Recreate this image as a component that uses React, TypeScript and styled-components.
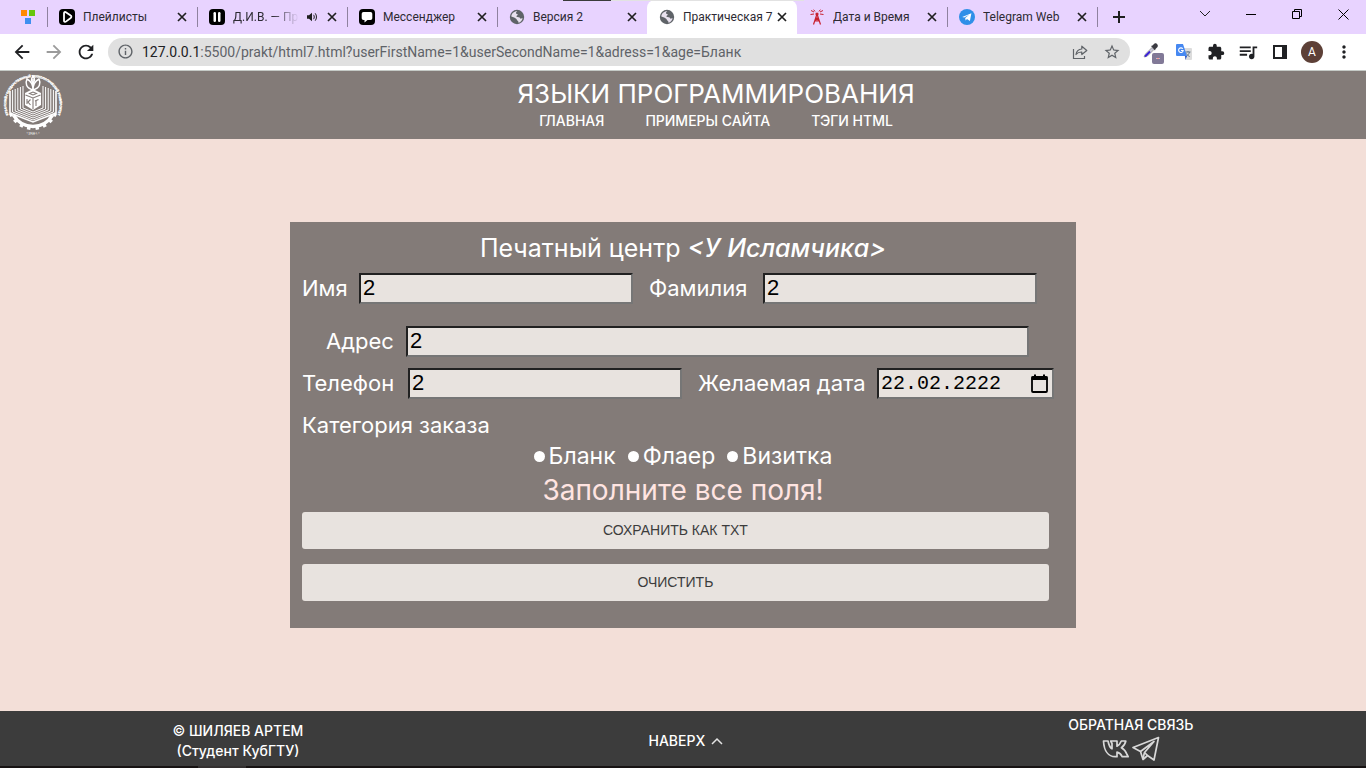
import React from "react";
import styled, { createGlobalStyle } from "styled-components";
import {
  MdArrowBack,
  MdArrowForward,
  MdExtension,
  MdInfoOutline,
  MdMoreVert,
  MdQueueMusic,
  MdRefresh,
  MdStarBorder,
} from "react-icons/md";

const GlobalStyle = createGlobalStyle`
  * { box-sizing: border-box; }
  html, body { margin: 0; padding: 0; }
  body { background: #f3dfd8; }
  button { font: inherit; color: inherit; padding: 0; border: 0; background: none; cursor: pointer; }
  svg { display: block; flex: none; }
`;

const siteFont = `Inter, "Open Sans", sans-serif`;
const chromeFont = `Roboto, "Open Sans", sans-serif`;

const Screen = styled.div`
  display: flex;
  flex-direction: column;
  min-height: 100vh;
`;

/* Browser window */

const TabStrip = styled.div`
  position: relative;
  display: flex;
  align-items: stretch;
  height: 34px;
  background: #e8d3ff;
  font-family: ${chromeFont};
  font-size: 12px;
  color: #2d2a33;
`;

const TopEdge = styled.div`
  position: absolute;
  top: 0;
  left: 563px;
  width: 241px;
  height: 1px;
  background: linear-gradient(to right, #3a3a3a 48px, #e2e2e2 48px);
`;

const PinnedTab = styled.button`
  display: flex;
  align-items: center;
  justify-content: center;
  width: 47px;
  padding-left: 9px;
`;

const Tab = styled.div<{ $active?: boolean; $divider?: boolean }>`
  position: relative;
  display: flex;
  align-items: center;
  flex: 0 1 150px;
  min-width: 0;
  padding: 0 8px 0 12px;
  border-radius: 8px 8px 0 0;
  background: ${(p) => (p.$active ? "#ffffff" : "transparent")};

  &::before {
    content: "";
    position: absolute;
    left: 0;
    top: 7px;
    width: 1px;
    height: 20px;
    background: ${(p) => (p.$divider ? "#8f829f" : "transparent")};
  }
`;

const TabTitle = styled.span<{ $fade?: boolean }>`
  flex: 1;
  min-width: 0;
  margin-left: 8px;
  margin-right: ${(p) => (p.$fade ? 8 : 0)}px;
  overflow: hidden;
  white-space: nowrap;
  line-height: 20px;
  ${(p) => p.$fade && "mask-image: linear-gradient(to right, #000 60%, transparent);"}
`;

const TabClose = styled.button<{ $spaced?: boolean }>`
  display: flex;
  align-items: center;
  justify-content: center;
  flex: none;
  width: 14px;
  height: 14px;
  margin-left: ${(p) => (p.$spaced ? 8 : 0)}px;
`;

const NewTab = styled.button`
  position: relative;
  display: flex;
  align-items: center;
  justify-content: center;
  width: 44px;

  &::before {
    content: "";
    position: absolute;
    left: 0;
    top: 7px;
    width: 1px;
    height: 20px;
    background: #8f829f;
  }
`;

const WindowControls = styled.div`
  display: flex;
  margin-left: auto;
`;

const WindowButton = styled.button`
  display: flex;
  align-items: center;
  justify-content: center;
  width: 46px;
  height: 28px;
`;

const Toolbar = styled.div`
  display: flex;
  align-items: center;
  height: 37px;
  padding: 0 6px 1px;
  background: #ffffff;
  border-bottom: 1px solid #c5cac6;
  font-family: ${chromeFont};
`;

const ToolButton = styled.button<{ $muted?: boolean }>`
  display: flex;
  align-items: center;
  justify-content: center;
  width: 32px;
  height: 28px;
  color: ${(p) => (p.$muted ? "#9b9b9b" : "#202124")};
`;

const Omnibox = styled.div`
  display: flex;
  align-items: center;
  flex: 1;
  min-width: 0;
  height: 28px;
  margin: 0 6px;
  padding: 0 9px;
  border-radius: 14px;
  background: #e0e0e0;
  color: #5f6368;
`;

const Address = styled.div`
  flex: 1;
  min-width: 0;
  margin-left: 8px;
  overflow: hidden;
  white-space: nowrap;
  font-size: 14px;
  line-height: 20px;
`;

const Host = styled.span`
  color: #202124;
`;

const OmniActions = styled.div`
  display: flex;
  align-items: center;
  gap: 15px;
`;

const Avatar = styled.button`
  width: 22px;
  height: 22px;
  margin: 0 5px;
  border-radius: 50%;
  background: #5d4037;
  color: #ffffff;
  font-family: Roboto, sans-serif;
  font-size: 12px;
  line-height: 22px;
`;

/* Site */

const SiteHeader = styled.header`
  display: flex;
  align-items: center;
  height: 68px;
  background: #837b78;
  color: #ffffff;
  font-family: ${siteFont};
`;

const HeaderCentre = styled.div`
  display: flex;
  flex: 1;
  flex-direction: column;
  align-items: center;
`;

const SiteTitle = styled.h1`
  margin: 0 0 2px;
  font-size: 26px;
  font-weight: 400;
  line-height: 30px;
`;

const SiteNav = styled.nav`
  display: flex;
  gap: 41px;
`;

const SiteLink = styled.a`
  color: #ffffff;
  font-size: 14px;
  font-weight: 500;
  line-height: 20px;
  text-decoration: none;
  white-space: nowrap;
`;

const Main = styled.main`
  display: flex;
  flex: 1;
  align-items: center;
  justify-content: center;
  background: #f3dfd8;
  font-family: ${siteFont};
`;

const OrderForm = styled.form`
  display: flex;
  flex-direction: column;
  width: 100%;
  max-width: 786px;
  padding: 10px 12px 27px;
  background: #837b78;
  color: #ffffff;
`;

const FormTitle = styled.h2`
  margin: 0 0 9px;
  font-size: 25px;
  font-weight: 400;
  line-height: 32px;
  text-align: center;

  em { font-weight: 500; }
`;

const Row = styled.div<{ $gap: number; $indent?: number }>`
  display: flex;
  align-items: center;
  height: 31px;
  margin-bottom: ${(p) => p.$gap}px;
  padding-left: ${(p) => p.$indent ?? 0}px;
`;

const Label = styled.label<{ $width: number }>`
  flex: none;
  width: ${(p) => p.$width}px;
  padding-bottom: 2px;
  font-size: 22px;
  line-height: 28px;
  white-space: nowrap;
`;

const Field = styled.input<{ $width: number }>`
  flex: 0 1 ${(p) => p.$width}px;
  min-width: 0;
  height: 31px;
  margin-right: 16px;
  padding: 0 2px 2px;
  border: 2px solid;
  border-color: #212121 #767676 #767676 #212121;
  border-radius: 0;
  background: #e8e3df;
  color: #000000;
  font-family: "Liberation Sans", Arial, sans-serif;
  font-size: 22px;
`;

const DateBox = styled.div`
  display: flex;
  align-items: center;
  flex: 0 1 177px;
  min-width: 0;
  height: 31px;
  padding: 0 3px 0 2px;
  border: 2px solid;
  border-color: #212121 #767676 #767676 #212121;
  background: #e8e3df;
  color: #000000;
`;

const DateInput = styled.input`
  flex: 1;
  min-width: 0;
  padding: 0;
  border: 0;
  background: none;
  color: inherit;
  font-family: "Liberation Mono", monospace;
  font-size: 20px;
`;

const Choices = styled.fieldset`
  min-width: 0;
  margin: 0;
  padding: 0;
  border: 0;
`;

const ChoicesTitle = styled.legend`
  padding: 0;
  font-size: 22px;
  line-height: 30px;
`;

const ChoiceRow = styled.div`
  display: flex;
  justify-content: center;
  gap: 12px;
  height: 32px;
`;

const Choice = styled.label`
  display: flex;
  align-items: center;
  gap: 4px;
  font-size: 23px;
  line-height: 30px;
`;

const Radio = styled.input`
  appearance: none;
  width: 11px;
  height: 11px;
  margin: 0;
  border-radius: 50%;
  background: #ffffff;

  &:checked { border: 3px solid #ffffff; background: #0075ff; }
`;

const Message = styled.p`
  margin: 0 0 4px;
  color: #ffe4e1;
  font-size: 28px;
  line-height: 36px;
  text-align: center;
`;

const Action = styled.button`
  width: 98%;
  height: 37px;
  padding-bottom: 2px;
  border-radius: 3px;
  background: #e8e3df;
  color: #3c3c3c;
  font-family: "Liberation Sans", Arial, sans-serif;
  font-size: 14px;

  & + & { margin-top: 15px; }
`;

const SiteFooter = styled.footer`
  display: flex;
  align-items: center;
  justify-content: space-around;
  height: 55px;
  background: #3c3c3c;
  color: #ffffff;
  font-family: ${siteFont};
  font-size: 14px;
  font-weight: 500;
  line-height: 20px;
  text-align: center;
`;

const FooterText = styled.p`
  margin: 0;
  padding-top: 4px;
`;

const TopLink = styled.a`
  display: flex;
  align-items: center;
  gap: 6px;
  padding-top: 4px;
  color: #ffffff;
  text-decoration: none;
`;

const Contacts = styled.div`
  display: flex;
  flex-direction: column;
  align-items: center;
`;

const SocialLinks = styled.div`
  display: flex;
  align-items: center;
  gap: 2px;
  height: 28px;
`;

const SocialLink = styled.a`
  color: #d8d8d8;
`;

const Taskbar = styled.div`
  height: 2px;
  background: linear-gradient(to right, #171313 198px, #333030 198px, #333030 246px, #171313 246px);
`;

/* Drawings */

const PlayIcon = () => (
  <svg width="16" height="16" viewBox="0 0 16 16">
    <rect width="16" height="16" rx="4" fill="#000" />
    <path d="M5 4.2c0-1 1-1.500 1.900-1l4.800 3.400c.9.600.9 1.800 0 2.400l-4.800 3.600c-.8.600-1.900.1-1.900-.9z" fill="none" stroke="#fff" strokeWidth="1.800" />
  </svg>
);

const PauseIcon = () => (
  <svg width="16" height="16" viewBox="0 0 16 16">
    <rect width="16" height="16" rx="4" fill="#000" />
    <rect x="4.500" y="3" width="2.500" height="10" rx="1.200" fill="#fff" />
    <rect x="9" y="3" width="2.500" height="10" rx="1.200" fill="#fff" />
  </svg>
);

const ChatIcon = () => (
  <svg width="16" height="16" viewBox="0 0 16 16">
    <rect width="16" height="16" rx="4" fill="#000" />
    <path d="M4.500 3h7A1.800 1.800 0 0 1 13.300 4.800v4.400A1.800 1.800 0 0 1 11.500 11H8.500L5.500 13.500V11h-1A1.800 1.800 0 0 1 2.700 9.200V4.800A1.800 1.800 0 0 1 4.500 3z" fill="#fff" />
  </svg>
);

const GlobeIcon = () => (
  <svg width="16" height="16" viewBox="0 0 16 16">
    <circle cx="8" cy="8" r="7.200" fill="#5f6368" />
    <path d="M8.300 2.200c-.8.700-1.500 1.100-1.300 2 .3.900 1.600.4 1.700 1.300.1.900-1.300 1-1.200 1.900.2.900 1.800.3 2.700.9.900.500.800 1.400 1.700 1.400.700 0 1-.6 1.700-.7-.3 2.300-1.900 4.300-4.200 4.800.2-.9-.1-1.500-.8-2-.6-.4-.6-1.200-1.200-1.700C6.400 9.300 4.200 8 2.300 7.600 2.500 4.400 5 2.100 8.300 2.200z" fill="#e8e1ee" />
  </svg>
);

const TowerIcon = () => (
  <svg width="16" height="16" viewBox="0 0 16 16" fill="none" stroke="#c8202f" strokeWidth="1.200">
    <path d="M8 5 4.500 15.500M8 5l3.500 10.500M6.500 9h3M5.500 12h5M6.500 9l4 3M9.500 9l-4 3" />
    <circle cx="8" cy="5" r="1" fill="#c8202f" />
    <path strokeWidth="1" d="M2 1.500 5 3M14 1.500 11 3M1.500 5.500 5 5M14.500 5.500 11 5M4.500.8 6.300 2.500M11.500.8 9.700 2.500" />
  </svg>
);

const TelegramIcon = () => (
  <svg width="16" height="16" viewBox="0 0 16 16">
    <circle cx="8" cy="8" r="8" fill="#2f8fe8" />
    <path d="M3.200 7.900 12.400 4.200 10.900 12 8 10l-1.400 1.500-.4-2.600 4-3.200-5 2.900z" fill="#fff" />
  </svg>
);

const BlocksIcon = () => (
  <svg width="14" height="14" viewBox="0 0 14 14">
    <rect width="6" height="6" fill="#ff8a00" />
    <rect x="8" width="6" height="6" fill="#66c60b" />
    <rect x="4" y="8" width="6" height="6" fill="#3f8ff0" />
  </svg>
);

const SpeakerIcon = () => (
  <svg width="10" height="10" viewBox="0 0 10 10">
    <path d="M0 3.200h2L5 .7v8.600L2 6.800H0z" fill="#1f1f1f" />
    <path d="M6.500 2.800c1 1.200 1 3.200 0 4.400M8.200 1.300c1.700 2 1.700 5.400 0 7.400" fill="none" stroke="#1f1f1f" strokeWidth="1" />
  </svg>
);

const CrossIcon = () => (
  <svg width="10" height="10" viewBox="0 0 10 10" fill="none" stroke="#1f1f1f" strokeWidth="1.700">
    <path d="m1 1 8 8M9 1 1 9" />
  </svg>
);

const PlusIcon = () => (
  <svg width="12" height="12" viewBox="0 0 12 12" fill="none" stroke="#1f1f1f" strokeWidth="2">
    <path d="M6 0v12M0 6h12" />
  </svg>
);

const ShareIcon = () => (
  <svg width="16" height="16" viewBox="0 0 16 16" fill="none" stroke="#5f6368" strokeWidth="1.200">
    <path d="M1.500 5v9.500h11V12" />
    <path d="M4 10.500C4.500 7 6.500 5.300 9.800 5V2.200L14.800 6.500 9.800 10.500V8C7.300 7.900 5.500 8.600 4 10.500z" strokeLinejoin="round" />
  </svg>
);

const DropperIcon = () => (
  <svg width="24" height="24" viewBox="0 0 24 24">
    <path d="m4 17 1.500-3L12 7.500l2 2L7.500 16z" fill="#c9c9d8" stroke="#777" strokeWidth=".6" />
    <path d="m5 16.500 5-5" stroke="#3b22d8" strokeWidth="1.800" />
    <path d="m11 6 1.500-.5L14 4c1.500-2 5 .8 3.500 3L15.500 9 15 10.500z" fill="#3b3b42" />
    <rect x="12" y="13" width="12" height="11" rx="2" fill="#817997" />
    <path d="M16.500 18.500h3" stroke="#fff" />
    <path d="M17.500 18.500h1" stroke="#e33" />
  </svg>
);

const TranslateIcon = () => (
  <svg width="16" height="16" viewBox="0 0 16 16">
    <path d="M7 4h8a1 1 0 0 1 1 1v10a1 1 0 0 1-1 1H9.500z" fill="#dcdcdc" />
    <path d="M9.500 8h5M12 7v1M13.500 8c-.5 2-1.800 3.500-3.200 4.300M10.500 9.500c.8 1.500 1.800 2.500 3.200 3" stroke="#65788a" fill="none" />
    <path d="M1 0h6l4 12H1a1 1 0 0 1-1-1V1a1 1 0 0 1 1-1z" fill="#4688f1" />
    <path d="M9 12h2l-1.500 4z" fill="#2a56c6" />
    <path d="M6.800 4.800A2.300 2.300 0 1 0 7.200 6.500H5" stroke="#fff" strokeWidth="1.100" fill="none" />
  </svg>
);

const SidePanelIcon = () => (
  <svg width="14" height="14" viewBox="0 0 14 14">
    <rect x="1" y="1" width="12" height="12" fill="none" stroke="#202124" strokeWidth="2" />
    <rect x="9" y="1" width="4" height="12" fill="#202124" />
  </svg>
);

const CalendarIcon = () => (
  <svg width="19" height="20" viewBox="0 0 19 20">
    <rect x="2" y="3" width="15" height="15" rx="1" fill="none" stroke="#000" strokeWidth="1.800" />
    <path d="M1.500 2.500h16V6h-16zM4 .5h2v3H4zM13 .5h2v3h-2z" fill="#000" />
  </svg>
);

const VkIcon = () => (
  <svg width="28" height="24" viewBox="0 0 28 24" fill="none" stroke="currentColor" strokeWidth="1.700" strokeLinejoin="round">
    <path d="M1.500 4H6c.8 4.300 2.200 6.800 4 7.800V6.500L8.700 4H15v5.200c2-1 3.400-2.800 4.300-5.200h4.500c-.6 3-2.200 5.200-4.400 6.800 2.600 1.400 4.500 3.600 5.600 6.700l1.200 2.200h-6c-.9-2.400-2.500-4-5.200-4.600v4.600h-1.800C6.500 19.700 2 14 1.500 4z" />
  </svg>
);

const PlaneIcon = () => (
  <svg width="28" height="26" viewBox="0 0 28 26" fill="none" stroke="currentColor" strokeWidth="1.700" strokeLinejoin="round">
    <path d="M26.500 1.500 1 11.500l7.500 4L11 23.500l4.500-4L22 24z" />
    <path d="M8.500 15.500 22 5.500 12.500 16.500 11 22.500M12.500 16.500l3 3" />
  </svg>
);

const bookPages = [0, 1, 2, 3, 4, 5];
const gearTeeth = [-64, -46, -28, -10, 10, 28, 46, 64];

const Emblem = () => (
  <svg width="66" height="66" viewBox="0 1 66 66" role="img" aria-label="КубГТУ">
    <defs>
      <path id="ring" d="M13.200 51.100A26.800 26.800 0 1 1 52.800 51.100" />
      <path id="ringBase" d="M20 61Q33 66 46 61" />
    </defs>
    <g fill="#fff" fontFamily="Liberation Sans, sans-serif" fontSize="3" fontWeight="700" textAnchor="middle">
      <text stroke="#fff" strokeWidth=".3"><textPath href="#ring" startOffset="50%">КУБАНСКИЙ ГОСУДАРСТВЕННЫЙ ТЕХНОЛОГИЧЕСКИЙ УНИВЕРСИТЕТ</textPath></text>
      <text><textPath href="#ringBase" startOffset="50%">• 1918 г. •</textPath></text>
    </g>
    <g fill="none" stroke="#fff">
      {bookPages.map((n) => (
        <path
          key={n}
          strokeWidth={n === 0 ? 1.6 : 1}
          d={`M${10 + 2.6 * n} ${20 - n}V${42 - n}L33 ${51 - 2 * n}L${56 - 2.6 * n} ${42 - n}V${20 - n}`}
        />
      ))}
      <path strokeWidth="1.500" d="M33 19V8M33 19C26 17 25 12 27 8c4 2 6 6 6 11zM33 19c7-2 8-7 6-11-4 2-6 6-6 11z" />
      <path strokeWidth="1.500" d="M33 12c-2-2-2-4 0-7 2 3 2 5 0 7z" />
      <path strokeWidth="3.500" d="M13.500 44.200A22.500 22.500 0 0 0 52.500 44.200" />
      {gearTeeth.map((a) => (
        <path key={a} strokeWidth="3.500" d="M33 56v3" transform={`rotate(${a} 33 33)`} />
      ))}
    </g>
    <path d="m33 18 8 4v12l-8 5-8-5V22z" fill="#fff" />
    <g stroke="#837b78" strokeWidth="1.100" fill="none">
      <path d="m25.500 24 7.500 3 7.500-3M33 27v11M27 28v5M30.500 28.500 28 31l2.500 3M36 30v5M35 30l3.500-1.500M29.500 22.500l3.500-1.500 3.500 1.500-3.500 1.500z" />
    </g>
  </svg>
);

type TabInfo = {
  title: string;
  icon: React.ReactNode;
  active?: boolean;
  divider?: boolean;
  sound?: boolean;
};

const tabs: TabInfo[] = [
  { title: "Плейлисты", icon: <PlayIcon />, divider: true },
  { title: "Д.И.В. — Пр", icon: <PauseIcon />, divider: true, sound: true },
  { title: "Мессенджер", icon: <ChatIcon />, divider: true },
  { title: "Версия 2", icon: <GlobeIcon />, divider: true },
  { title: "Практическая 7", icon: <GlobeIcon />, active: true },
  { title: "Дата и Время", icon: <TowerIcon /> },
  { title: "Telegram Web", icon: <TelegramIcon />, divider: true },
];

export default function App() {
  return (
    <Screen>
      <GlobalStyle />
      <TabStrip>
        <PinnedTab type="button" aria-label="Закреплённая вкладка"><BlocksIcon /></PinnedTab>
        {tabs.map((t) => (
          <Tab key={t.title} $active={t.active} $divider={t.divider}>
            {t.icon}
            <TabTitle $fade={t.sound}>{t.title}</TabTitle>
            {t.sound && <SpeakerIcon />}
            <TabClose type="button" aria-label="Закрыть" $spaced={t.sound}><CrossIcon /></TabClose>
          </Tab>
        ))}
        <NewTab type="button" aria-label="Новая вкладка"><PlusIcon /></NewTab>
        <WindowControls>
          <WindowButton type="button" aria-label="Поиск вкладок">
            <svg width="12" height="8" viewBox="0 0 12 8" fill="none" stroke="#222"><path d="m1 1 5 5 5-5" /></svg>
          </WindowButton>
          <WindowButton type="button" aria-label="Свернуть">
            <svg width="10" height="10" viewBox="0 0 10 10" fill="none" stroke="#000"><path d="M0 5.500h10" /></svg>
          </WindowButton>
          <WindowButton type="button" aria-label="Развернуть">
            <svg width="10" height="10" viewBox="0 0 10 10" fill="none" stroke="#000"><path d="M.5 2.500h7v7h-7zM2.500 2.500v-2h7v7h-2" /></svg>
          </WindowButton>
          <WindowButton type="button" aria-label="Закрыть окно">
            <svg width="11" height="11" viewBox="0 0 11 11" fill="none" stroke="#000"><path d="m.5.5 10 10M10.500.5l-10 10" /></svg>
          </WindowButton>
        </WindowControls>
        <TopEdge />
      </TabStrip>

      <Toolbar>
        <ToolButton type="button" aria-label="Назад"><MdArrowBack size={22} /></ToolButton>
        <ToolButton type="button" aria-label="Вперёд" $muted><MdArrowForward size={22} /></ToolButton>
        <ToolButton type="button" aria-label="Обновить"><MdRefresh size={22} /></ToolButton>
        <Omnibox>
          <MdInfoOutline size={17} />
          <Address><Host>127.0.0.1</Host>:5500/prakt/html7.html?userFirstName=1&amp;userSecondName=1&amp;adress=1&amp;age=Бланк</Address>
          <OmniActions>
            <button type="button" aria-label="Поделиться"><ShareIcon /></button>
            <button type="button" aria-label="В закладки"><MdStarBorder size={18} /></button>
          </OmniActions>
        </Omnibox>
        <ToolButton type="button" aria-label="Пипетка"><DropperIcon /></ToolButton>
        <ToolButton type="button" aria-label="Переводчик"><TranslateIcon /></ToolButton>
        <ToolButton type="button" aria-label="Расширения"><MdExtension size={18} /></ToolButton>
        <ToolButton type="button" aria-label="Медиа"><MdQueueMusic size={22} /></ToolButton>
        <ToolButton type="button" aria-label="Боковая панель"><SidePanelIcon /></ToolButton>
        <Avatar type="button">A</Avatar>
        <ToolButton type="button" aria-label="Меню"><MdMoreVert size={20} /></ToolButton>
      </Toolbar>

      <SiteHeader>
        <Emblem />
        <HeaderCentre>
          <SiteTitle>ЯЗЫКИ ПРОГРАММИРОВАНИЯ</SiteTitle>
          <SiteNav>
            <SiteLink href="#main">ГЛАВНАЯ</SiteLink>
            <SiteLink href="#examples">ПРИМЕРЫ САЙТА</SiteLink>
            <SiteLink href="#tags">ТЭГИ HTML</SiteLink>
          </SiteNav>
        </HeaderCentre>
      </SiteHeader>

      <Main>
        <OrderForm onSubmit={(e) => e.preventDefault()}>
          <FormTitle>Печатный центр <em>&lt;У Исламчика&gt;</em></FormTitle>
          <Row $gap={22}>
            <Label htmlFor="firstName" $width={57}>Имя</Label>
            <Field id="firstName" $width={274} defaultValue="2" />
            <Label htmlFor="lastName" $width={114}>Фамилия</Label>
            <Field id="lastName" $width={274} defaultValue="2" />
          </Row>
          <Row $gap={11} $indent={24}>
            <Label htmlFor="address" $width={80}>Адрес</Label>
            <Field id="address" $width={623} defaultValue="2" />
          </Row>
          <Row $gap={11}>
            <Label htmlFor="phone" $width={106}>Телефон</Label>
            <Field id="phone" type="tel" $width={274} defaultValue="2" />
            <Label htmlFor="date" $width={179}>Желаемая дата</Label>
            <DateBox>
              <DateInput id="date" defaultValue="22.02.2222" />
              <button type="button" aria-label="Открыть календарь"><CalendarIcon /></button>
            </DateBox>
          </Row>
          <Choices>
            <ChoicesTitle>Категория заказа</ChoicesTitle>
            <ChoiceRow>
              {["Бланк", "Флаер", "Визитка"].map((c) => (
                <Choice key={c}><Radio type="radio" name="category" value={c} />{c}</Choice>
              ))}
            </ChoiceRow>
          </Choices>
          <Message>Заполните все поля!</Message>
          <Action type="submit">СОХРАНИТЬ КАК TXT</Action>
          <Action type="reset">ОЧИСТИТЬ</Action>
        </OrderForm>
      </Main>

      <SiteFooter>
        <FooterText>© ШИЛЯЕВ АРТЕМ<br />(Студент КубГТУ)</FooterText>
        <TopLink href="#top">
          НАВЕРХ
          <svg width="12" height="8" viewBox="0 0 12 8" fill="none" stroke="#e4e4e4" strokeWidth="1.500"><path d="m1 7 5-5 5 5" /></svg>
        </TopLink>
        <Contacts>
          ОБРАТНАЯ СВЯЗЬ
          <SocialLinks>
            <SocialLink href="#vk" aria-label="ВКонтакте"><VkIcon /></SocialLink>
            <SocialLink href="#telegram" aria-label="Telegram"><PlaneIcon /></SocialLink>
          </SocialLinks>
        </Contacts>
      </SiteFooter>
      <Taskbar />
    </Screen>
  );
}
